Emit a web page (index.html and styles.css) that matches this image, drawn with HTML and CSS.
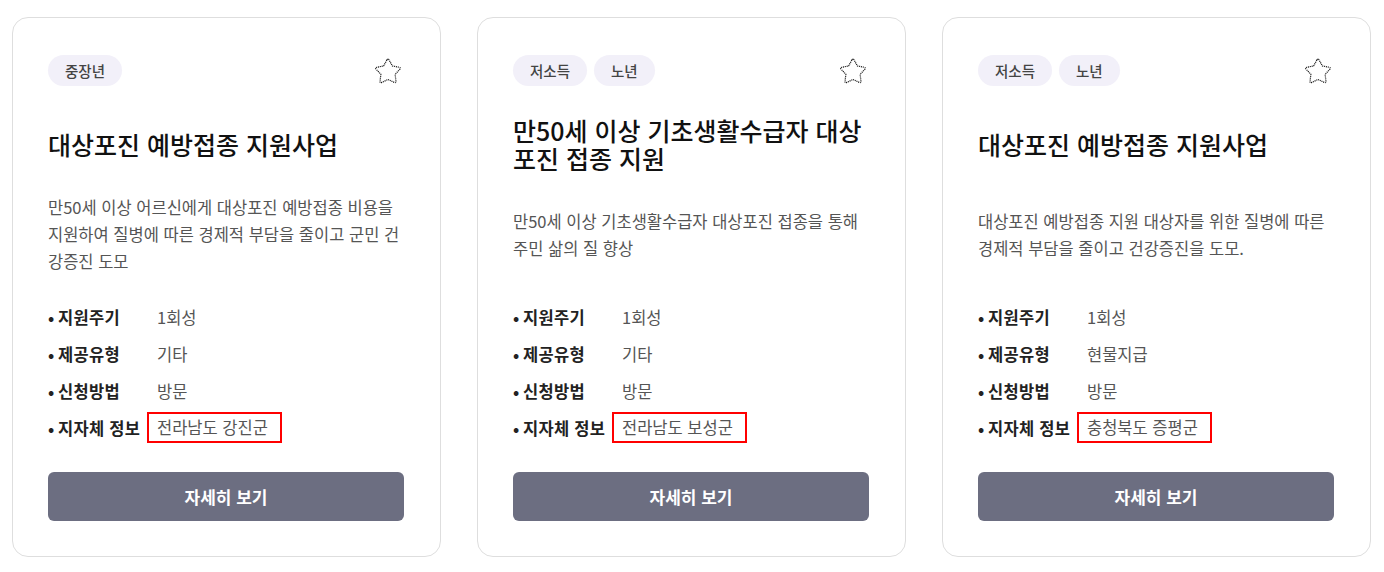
FILE: index.html
```html
<!DOCTYPE html>
<html lang="ko">
<head>
<meta charset="utf-8">
<title>지원사업 카드</title>
<link rel="stylesheet" href="styles.css">
</head>
<body>
<div class="cards">
  <article class="card">
    <div class="card-head">
      <div class="tags"><span class="tag">중장년</span></div>
      <button class="fav" aria-label="즐겨찾기">
        <svg viewBox="0 0 30 30" width="30" height="30"><path d="M13.90 3.98 Q15 2 16.10 3.98 L19.41 9.93 L26.09 11.24 Q28.31 11.67 26.77 13.33 L22.13 18.32 L22.96 25.08 Q23.23 27.33 21.17 26.37 L15 23.5 L8.83 26.37 Q6.77 27.33 7.04 25.08 L7.87 18.32 L3.24 13.33 Q1.69 11.67 3.92 11.24 L10.59 9.93 Z"/></svg>
      </button>
    </div>
    <div class="title-box"><h2 class="title">대상포진 예방접종 지원사업</h2></div>
    <div class="desc-box"><p class="desc">만50세 이상 어르신에게 대상포진 예방접종 비용을 지원하여 질병에 따른 경제적 부담을 줄이고 군민 건강증진 도모</p></div>
    <ul class="info">
      <li><span class="label">지원주기</span><span class="value">1회성</span></li>
      <li><span class="label">제공유형</span><span class="value">기타</span></li>
      <li><span class="label">신청방법</span><span class="value">방문</span></li>
      <li><span class="label">지자체 정보</span><span class="value mark">전라남도 강진군</span></li>
    </ul>
    <button class="more">자세히 보기</button>
  </article>

  <article class="card">
    <div class="card-head">
      <div class="tags"><span class="tag">저소득</span><span class="tag">노년</span></div>
      <button class="fav" aria-label="즐겨찾기">
        <svg viewBox="0 0 30 30" width="30" height="30"><path d="M13.90 3.98 Q15 2 16.10 3.98 L19.41 9.93 L26.09 11.24 Q28.31 11.67 26.77 13.33 L22.13 18.32 L22.96 25.08 Q23.23 27.33 21.17 26.37 L15 23.5 L8.83 26.37 Q6.77 27.33 7.04 25.08 L7.87 18.32 L3.24 13.33 Q1.69 11.67 3.92 11.24 L10.59 9.93 Z"/></svg>
      </button>
    </div>
    <div class="title-box"><h2 class="title">만50세 이상 기초생활수급자 대상 포진 접종 지원</h2></div>
    <div class="desc-box"><p class="desc">만50세 이상 기초생활수급자 대상포진 접종을 통해 주민 삶의 질 향상</p></div>
    <ul class="info">
      <li><span class="label">지원주기</span><span class="value">1회성</span></li>
      <li><span class="label">제공유형</span><span class="value">기타</span></li>
      <li><span class="label">신청방법</span><span class="value">방문</span></li>
      <li><span class="label">지자체 정보</span><span class="value mark">전라남도 보성군</span></li>
    </ul>
    <button class="more">자세히 보기</button>
  </article>

  <article class="card">
    <div class="card-head">
      <div class="tags"><span class="tag">저소득</span><span class="tag">노년</span></div>
      <button class="fav" aria-label="즐겨찾기">
        <svg viewBox="0 0 30 30" width="30" height="30"><path d="M13.90 3.98 Q15 2 16.10 3.98 L19.41 9.93 L26.09 11.24 Q28.31 11.67 26.77 13.33 L22.13 18.32 L22.96 25.08 Q23.23 27.33 21.17 26.37 L15 23.5 L8.83 26.37 Q6.77 27.33 7.04 25.08 L7.87 18.32 L3.24 13.33 Q1.69 11.67 3.92 11.24 L10.59 9.93 Z"/></svg>
      </button>
    </div>
    <div class="title-box"><h2 class="title">대상포진 예방접종 지원사업</h2></div>
    <div class="desc-box"><p class="desc">대상포진 예방접종 지원 대상자를 위한 질병에 따른 경제적 부담을 줄이고 건강증진을 도모.</p></div>
    <ul class="info">
      <li><span class="label">지원주기</span><span class="value">1회성</span></li>
      <li><span class="label">제공유형</span><span class="value">현물지급</span></li>
      <li><span class="label">신청방법</span><span class="value">방문</span></li>
      <li><span class="label">지자체 정보</span><span class="value mark">충청북도 증평군</span></li>
    </ul>
    <button class="more">자세히 보기</button>
  </article>
</div>
</body>
</html>
```

FILE: styles.css
```css
* { box-sizing: border-box; }

body {
  margin: 0;
  background: #ffffff;
  font-family: "Noto Sans CJK KR", "Noto Sans", sans-serif;
  color: #222;
}

.cards {
  display: flex;
  gap: 36px;
  padding: 17px 0 0 12px;
}

.card {
  width: 429px;
  height: 540px;
  border: 1px solid #dedede;
  border-radius: 16px;
  padding: 37px 36px 34px 35px;
  display: flex;
  flex-direction: column;
  background: #fff;
}

.card-head {
  display: flex;
  justify-content: space-between;
  align-items: center;
  height: 31px;
}

.tags {
  display: flex;
  gap: 7px;
}

.tag {
  display: inline-flex;
  align-items: center;
  height: 31px;
  padding: 0 17px;
  border-radius: 16px;
  background: #f2f0f9;
  color: #444;
  font-size: 14.5px;
  font-weight: 500;
}

.fav {
  border: 0;
  background: none;
  padding: 0;
  width: 30px;
  height: 30px;
  margin-right: 1px;
  cursor: pointer;
}

.fav svg {
  display: block;
  fill: none;
  stroke: #1a1a1a;
  stroke-width: 1.2;
  stroke-dasharray: 1.1 0.8;
}

.title-box {
  margin-top: 28px;
  height: 60px;
  display: flex;
  align-items: center;
}

.title {
  margin: 0;
  font-size: 25px;
  line-height: 28px;
  font-weight: 500;
  color: #111;
}

.desc-box {
  margin-top: 20px;
  height: 81px;
  display: flex;
  align-items: center;
}

.desc {
  margin: 0;
  font-size: 16.5px;
  line-height: 27px;
  color: #555;
}

.info {
  list-style: none;
  margin: 26px 0 0 0;
  padding: 0;
  display: flex;
  flex-direction: column;
  gap: 6px;
}

.info li {
  display: flex;
  align-items: center;
  height: 31px;
  font-size: 16.5px;
}

.label {
  width: 109px;
  flex: none;
  font-weight: 700;
  color: #222;
  letter-spacing: 0.3px;
}

.label::before {
  content: "•";
  display: inline-block;
  width: 10px;
  font-weight: 700;
}

.value {
  color: #555;
}

.value.mark {
  border: 2px solid #ff0000;
  padding: 2px 12px 2px 8px;
  margin-left: -10px;
  line-height: 23px;
}

.more {
  margin-top: 29px;
  height: 49px;
  width: 100%;
  border: 0;
  border-radius: 6px;
  background: #6c6e81;
  color: #fff;
  font-family: inherit;
  font-size: 17px;
  font-weight: 700;
  cursor: pointer;
}
```
